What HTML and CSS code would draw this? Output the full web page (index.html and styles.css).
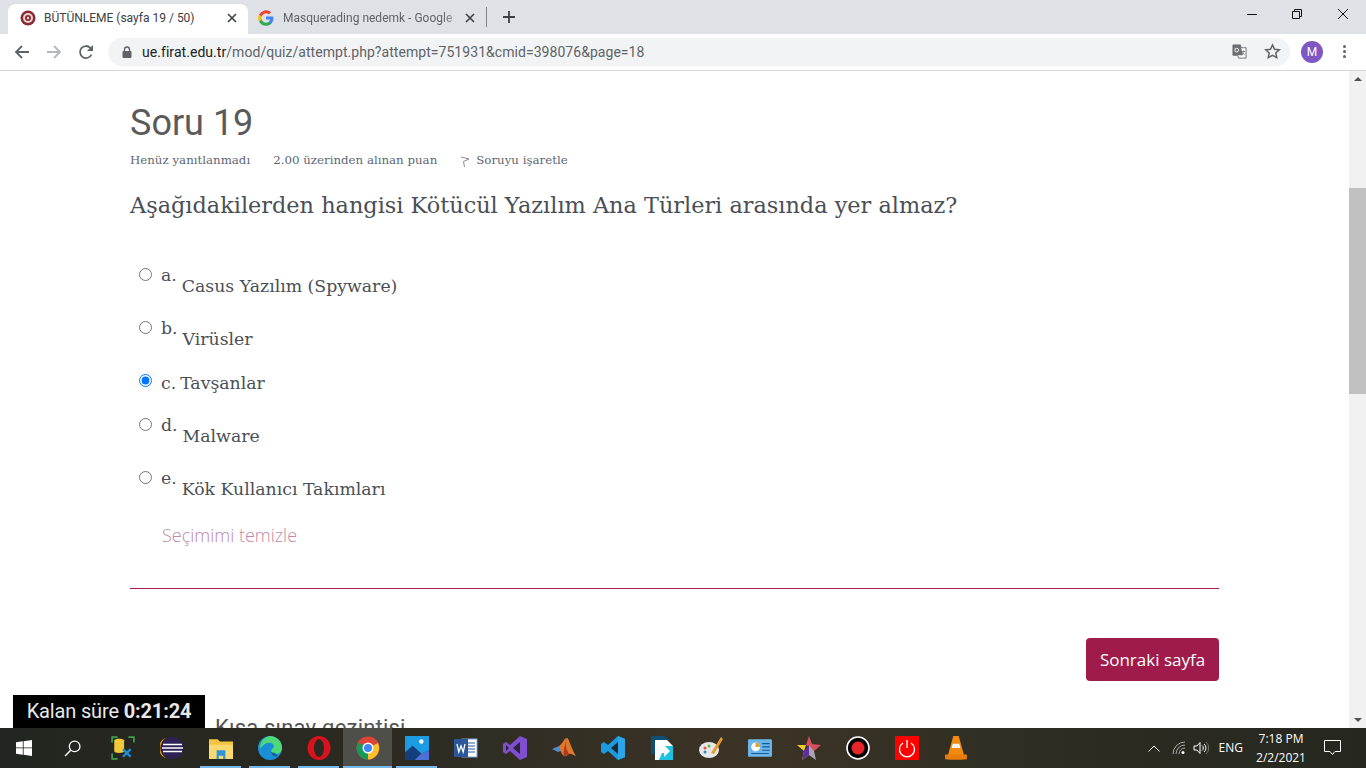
FILE: index.html
```html
<!DOCTYPE html>
<html lang="tr">
<head>
<meta charset="utf-8">
<title>BÜTÜNLEME (sayfa 19 / 50)</title>
<link rel="stylesheet" href="styles.css">
</head>
<body>
<div class="screen">
  <header class="tabbar">
    <div class="tab active">
      <svg class="fav" viewBox="0 0 16 16"><circle cx="8" cy="8" r="7.5" fill="#8c2a32"/><circle cx="8" cy="8" r="5" fill="#e8d5d5"/><circle cx="8" cy="8" r="3" fill="#8c2a32"/><circle cx="8" cy="8" r="1.2" fill="#e8d5d5"/></svg>
      <span class="tab-title">BÜTÜNLEME (sayfa 19 / 50)</span>
      <svg class="tab-x" viewBox="0 0 10 10"><path d="M1 1l8 8M9 1l-8 8" stroke="#3c4043" stroke-width="1.6"/></svg>
    </div>
    <div class="tab second">
      <svg class="fav" viewBox="0 0 16 16"><path d="M15.4 8.2c0-.6 0-1.100-.2-1.600H8v3h4.100a3.600 3.600 0 0 1-1.500 2.300v2h2.500c1.500-1.400 2.300-3.400 2.300-5.700z" fill="#4285f4"/><path d="M8 15.700c2.100 0 3.800-.7 5.100-1.800l-2.500-2c-.7.500-1.600.8-2.600.8-2 0-3.700-1.400-4.300-3.200H1.100v2A7.700 7.700 0 0 0 8 15.700z" fill="#34a853"/><path d="M3.700 9.500a4.600 4.600 0 0 1 0-3V4.500H1.100a7.700 7.700 0 0 0 0 7z" fill="#fbbc05"/><path d="M8 3.300c1.100 0 2.100.4 2.900 1.100l2.200-2.200A7.700 7.700 0 0 0 1.100 4.500l2.600 2C4.300 4.700 6 3.300 8 3.300z" fill="#ea4335"/></svg>
      <span class="tab-title fade">Masquerading nedemk - Google</span>
      <svg class="tab-x" viewBox="0 0 10 10"><path d="M1 1l8 8M9 1l-8 8" stroke="#3c4043" stroke-width="1.6"/></svg>
    </div>
    <span class="tab-sep"></span>
    <svg class="new-tab" viewBox="0 0 12 12"><path d="M6 0v12M0 6h12" stroke="#3c4043" stroke-width="1.800"/></svg>
    <div class="win-btns">
      <svg viewBox="0 0 12 12"><path d="M1 6.500h10" stroke="#111" stroke-width="1"/></svg>
      <svg viewBox="0 0 12 12"><path d="M1.500 3.500h7v7h-7zM3.500 3.500v-2h7v7h-2" fill="none" stroke="#111" stroke-width="1"/></svg>
      <svg viewBox="0 0 12 12"><path d="M1 1l10 10M11 1L1 11" stroke="#111" stroke-width="1"/></svg>
    </div>
  </header>
  <div class="toolbar">
    <svg class="nav" viewBox="0 0 16 16"><path d="M15 8H2M8 2L2 8l6 6" fill="none" stroke="#5f6368" stroke-width="1.800"/></svg>
    <svg class="nav" viewBox="0 0 16 16"><path d="M1 8h13M8 2l6 6-6 6" fill="none" stroke="#b5b8bb" stroke-width="1.800"/></svg>
    <svg class="nav" viewBox="0 0 16 16"><path d="M13.500 10.500A6 6 0 1 1 12.300 3.800L14.500 6" fill="none" stroke="#5f6368" stroke-width="1.800"/><path d="M15 1v6H9z" fill="#5f6368"/></svg>
    <div class="omnibox">
      <svg class="lock" viewBox="0 0 10 12"><path d="M2.500 5V3.500a2.500 2.500 0 0 1 5 0V5" fill="none" stroke="#5f6368" stroke-width="1.300"/><rect x="0.500" y="5" width="9" height="7" rx="1" fill="#5f6368"/></svg>
      <span class="url"><b>ue.firat.edu.tr</b>/mod/quiz/attempt.php?attempt=751931&amp;cmid=398076&amp;page=18</span>
      <svg class="translate" viewBox="0 0 16 16"><path d="M1 1h8l1 3h5v11H7l-1-3H1z" fill="#fff" stroke="#6b6e72" stroke-width="1"/><path d="M1 1h8l2.500 11H1z" fill="#6b6e72"/><circle cx="5" cy="6.500" r="2" fill="none" stroke="#fff" stroke-width="1"/><path d="M10 8h4M12 7v1M13 8c-.5 2-2 3-3 3.500M10.500 8.500c.5 1.500 2 2.500 3 3" fill="none" stroke="#6b6e72" stroke-width=".8"/></svg>
      <svg class="star" viewBox="0 0 16 16"><path d="M8 1.800l1.900 4.100 4.500.5-3.300 3 .9 4.400L8 11.600l-4 2.200.9-4.400-3.300-3 4.500-.5z" fill="none" stroke="#5f6368" stroke-width="1.400"/></svg>
    </div>
    <span class="avatar">M</span>
    <span class="menu"><i></i><i></i><i></i></span>
  </div>

  <div class="viewport">
    <main class="page">
      <h2 class="qno">Soru 19</h2>
      <div class="qinfo">
        <span>Henüz yanıtlanmadı</span>
        <span>2.00 üzerinden alınan puan</span>
        <span class="flag"><svg viewBox="0 0 10 12"><path d="M1 1l8 2-5.500 2.500L4.500 11" fill="none" stroke="#8a8a8a" stroke-width="1"/></svg>Soruyu işaretle</span>
      </div>
      <p class="qtext">Aşağıdakilerden hangisi Kötücül Yazılım Ana Türleri arasında yer almaz?</p>
      <div class="answers">
        <label class="ans"><input type="radio" name="a"><span class="letter">a.</span><span class="low">Casus Yazılım (Spyware)</span></label>
        <label class="ans"><input type="radio" name="a"><span class="letter">b.</span><span class="low">Virüsler</span></label>
        <label class="ans flat"><input type="radio" name="a" checked><span class="letter">c.</span><span class="w-c">Tavşanlar</span></label>
        <label class="ans"><input type="radio" name="a"><span class="letter">d.</span><span class="low">Malware</span></label>
        <label class="ans"><input type="radio" name="a"><span class="letter">e.</span><span class="low">Kök Kullanıcı Takımları</span></label>
      </div>
      <a class="clear">Seçimimi temizle</a>
      <div class="rule"></div>
      <div class="submit-row"><button class="next">Sonraki sayfa</button></div>
      <h3 class="navhead">Kısa sınav gezintisi</h3>
    </main>
    <div class="scrollbar">
      <span class="arrow up"></span>
      <span class="thumb"></span>
      <span class="arrow down"></span>
    </div>
    <div class="timer">Kalan süre <b>0:21:24</b></div>
  </div>

  <footer class="taskbar">
    <div class="slot start"><svg viewBox="0 0 16 16"><path d="M0 2.300l6.800-1v6.200H0zM7.600 1.200L16 0v7.500H7.600zM0 8.300h6.800v6.400l-6.800-1zM7.600 8.300H16V16l-8.400-1.200z" fill="#fff"/></svg></div>
    <div class="slot search"><svg viewBox="0 0 16 16"><circle cx="10" cy="6" r="5" fill="none" stroke="#fff" stroke-width="1.200"/><path d="M6.300 9.700L1 15" stroke="#fff" stroke-width="1.400"/></svg></div>
    <div class="slot app"><svg viewBox="0 0 22 22"><path d="M1 6V1h5M16 1h5v5M1 16v5h5" fill="none" stroke="#3fa34d" stroke-width="1.500"/><path d="M3 4c0-2 9-2 9 0v10c0 2-9 2-9 0z" fill="#f3c93b"/><path d="M11 19l7-7M11 12l7 7" stroke="#1f8ed6" stroke-width="2.200"/></svg></div>
    <div class="slot app"><svg viewBox="0 0 24 24"><circle cx="12.500" cy="12" r="11" fill="#2c2255"/><path d="M6 1.800A11 11 0 0 0 6 22.200 12 12 0 0 1 6 1.800z" fill="#f7941e"/><path d="M3 8.500h19M2 12h21M3 15.500h19" stroke="#fff" stroke-width="1.500"/></svg></div>
    <div class="slot app on"><svg viewBox="0 0 22 20"><path d="M0 2h8l2 2h12v16H0z" fill="#f5c542"/><path d="M0 7h22v13H0z" fill="#fbd971"/><path d="M7 12h8v8h-2v-3H9v3H7z" fill="#2f93d8"/></svg></div>
    <div class="slot app on"><svg viewBox="0 0 24 24"><circle cx="12" cy="12" r="12" fill="#1a8fd8"/><path d="M12 0a12 12 0 0 1 12 12c0 4-3 6-6 6s-5-1-5-3 3-3 3-5-3-4-7-3c-3 1-6 4-7 6A12 12 0 0 1 12 0z" fill="#4fd87a"/><path d="M13 15c0 3 3 7 7 5l-3-3c-2 0-4-1-4-2z" fill="#12609c"/></svg></div>
    <div class="slot app on"><svg viewBox="0 0 24 24"><ellipse cx="12" cy="12" rx="11.500" ry="12" fill="#d8131f"/><ellipse cx="12" cy="12" rx="5" ry="9" fill="#2a2a22"/></svg></div>
    <div class="slot app on current"><svg viewBox="0 0 24 24"><circle cx="12" cy="12" r="11.500" fill="#db4437"/><path d="M12 12L22 7a11.500 11.500 0 0 1-10 16.500z" fill="#fbc02d"/><path d="M12 12L2 6.500A11.500 11.500 0 0 0 12 23.500z" fill="#0f9d58"/><circle cx="12" cy="12" r="5.500" fill="#fff"/><circle cx="12" cy="12" r="4" fill="#4285f4"/></svg></div>
    <div class="slot app on"><svg viewBox="0 0 22 22"><rect width="22" height="22" fill="#1b9ce2"/><path d="M0 22V15l7-6 8 7 7-3v9z" fill="#143f7c"/><path d="M9 22l6-6 7-3v9z" fill="#4c71d4"/><circle cx="15" cy="5" r="2" fill="#fff"/></svg></div>
    <div class="slot app"><svg viewBox="0 0 24 22"><rect x="8" y="2" width="15" height="18" fill="#fff" stroke="#7fa4d8"/><path d="M14 6h7M14 9h7M14 12h7M14 15h7" stroke="#2b579a"/><rect y="2" width="14" height="18" fill="#2b579a"/><path d="M3 7l1.800 8 2.200-6 2.200 6L11 7" fill="none" stroke="#fff" stroke-width="1.300"/></svg></div>
    <div class="slot app"><svg viewBox="0 0 24 24"><path d="M17 0l7 3v18l-7 3-10-9-4 3-3-2V8l3-2 4 3z" fill="#7f4fd0"/><path d="M17 6v12l-7-6z" fill="#2a2438"/><path d="M3 9l3 3-3 3z" fill="#2a2438"/></svg></div>
    <div class="slot app"><svg viewBox="0 0 24 22"><path d="M0 12l7-3 5 4-6 2z" fill="#4f8cc9"/><path d="M7 9c3-1 5-8 8-8 2 0 5 13 9 18-4-1-5-3-7-2s-3 3-5 2-3-4-5-10z" fill="#e0782a"/><path d="M15 1c-2 3-2 9 2 16-3 1-4 3-5 2-1-3 1-14 3-18z" fill="#b33a1a"/></svg></div>
    <div class="slot app"><svg viewBox="0 0 24 24"><path d="M17 0l7 3v18l-7 3-10-9-4 3-3-2V8l3-2 4 3z" fill="#1a9be0"/><path d="M17 6v12l-7-6z" fill="#23272a"/><path d="M17 0l7 3v18l-7 3z" fill="#2aa5ea"/></svg></div>
    <div class="slot app"><svg viewBox="0 0 22 24"><path d="M0 0h13l6 4H4v14H0z" fill="#0e4f73"/><path d="M4 4h12l6 6v14H4z" fill="#fff"/><path d="M14 10l8 0v14H8z" fill="#1ec3e0"/><path d="M6 13h7V9l6 6-6 6v-4H6z" fill="#fff"/></svg></div>
    <div class="slot app"><svg viewBox="0 0 24 24"><ellipse cx="10" cy="14" rx="10" ry="8" fill="#e6e8e8"/><circle cx="6" cy="12" r="1.500" fill="#e5533d"/><circle cx="10" cy="10" r="1.500" fill="#5fb84d"/><circle cx="6" cy="16" r="1.500" fill="#3b82c4"/><path d="M22 1l2 2-9 15-3-1z" fill="#e89a2c"/></svg></div>
    <div class="slot app"><svg viewBox="0 0 22 16"><rect width="22" height="16" rx="1" fill="#6db5e8"/><circle cx="7" cy="7" r="4" fill="#fff"/><path d="M7 7V3a4 4 0 0 1 4 4z" fill="#e0a02c"/><path d="M13 4h7M13 7h7M13 10h7M3 13h16" stroke="#0e5d96"/></svg></div>
    <div class="slot app"><svg viewBox="0 0 24 24"><path d="M12 0l3 8 9 1-7 6-8-6z" fill="#d94f58"/><path d="M12 0L9 9 0 9l7 6z" fill="#f5c927"/><path d="M7 15l-2 9 7-5z" fill="#f5c927"/><path d="M7 15l5-6v10l-7 5z" fill="#5e2da0"/><path d="M17 15l2 9-7-5V9z" fill="#a9a4b5"/></svg></div>
    <div class="slot app"><svg viewBox="0 0 24 24"><circle cx="12" cy="12" r="11" fill="#000" stroke="#fff" stroke-width="1.600"/><circle cx="12" cy="12" r="6.500" fill="#e5262a"/></svg></div>
    <div class="slot app"><svg viewBox="0 0 24 24"><rect width="24" height="24" fill="#f00"/><path d="M8 7a7.500 7.500 0 1 0 8 0M12 4v8" fill="none" stroke="#fff" stroke-width="1.300"/></svg></div>
    <div class="slot app"><svg viewBox="0 0 20 22"><path d="M10 0l2.500 0 5 18H2.500L7.500 0z" fill="#f08a10"/><path d="M7 7h6l1 4H6z" fill="#f3f3f3"/><path d="M0 17h20v4c0 1-20 1-20 0z" fill="#e87c0c"/></svg></div>
    <div class="tray">
      <svg class="t-chev" viewBox="0 0 12 7"><path d="M.5 6.500L6 1l5.500 5.500" fill="none" stroke="#fff" stroke-width="1"/></svg>
      <svg class="t-wifi" viewBox="0 0 14 14"><path d="M1 13A12 12 0 0 1 13 1M4 13A9 9 0 0 1 13 4M7 13a6 6 0 0 1 6-6" fill="none" stroke="#aaa" stroke-width="1"/><circle cx="11" cy="11.500" r="1.500" fill="#fff"/></svg>
      <svg class="t-vol" viewBox="0 0 16 14"><path d="M1 5h3l3-3.500v11L4 9H1z" fill="none" stroke="#fff" stroke-width="1"/><path d="M9 4.500a3 3 0 0 1 0 5M11 3a5 5 0 0 1 0 8" fill="none" stroke="#fff" stroke-width="1"/><path d="M13 1a8 8 0 0 1 0 12" fill="none" stroke="#777" stroke-width="1"/></svg>
      <span class="t-lang">ENG</span>
      <span class="t-clock"><span>7:18 PM</span><span>2/2/2021</span></span>
      <svg class="t-note" viewBox="0 0 17 16"><path d="M.5.500h16v11h-5.500l-2.500 3-2.500-3H.5z" fill="none" stroke="#fff" stroke-width="1"/></svg>
    </div>
  </footer>
</div>
</body>
</html>
```
FILE: styles.css
```css
* { box-sizing: border-box; }
html, body { margin: 0; height: 100%; overflow: hidden; }
body { font-family: "Liberation Sans", Arial, sans-serif; background: #fff; }
.screen { width: 1366px; height: 768px; display: flex; flex-direction: column; overflow: hidden; }

.tabbar { height: 34px; flex: none; background: #dee1e6; display: flex; align-items: flex-end; padding-left: 8px; }
.tab { height: 30px; display: flex; align-items: center; color: #5f6368; font: 12px/16px "Roboto", sans-serif; flex: none; }
.tab.active { width: 240px; background: #fff; border-radius: 8px 8px 0 0; color: #3c4043; padding: 0 11px 2px 12px; }
.tab.second { width: 238px; padding: 0 11px 2px 10px; }
.fav { width: 16px; height: 16px; flex: none; margin-right: 8px; }
.tab.second .fav { margin-right: 9px; }
.tab-title { flex: 1; min-width: 0; white-space: nowrap; }
.tab-title.fade { -webkit-mask-image: linear-gradient(90deg, #000 88%, transparent); mask-image: linear-gradient(90deg, #000 88%, transparent); }
.tab-x { width: 10px; height: 10px; flex: none; }
.tab-sep { width: 1px; height: 20px; background: #80868b; margin: 0 0 7px 0; flex: none; }
.new-tab { width: 12px; height: 12px; margin: 0 0 11px 16px; flex: none; }
.win-btns { margin-left: auto; display: flex; height: 34px; align-items: center; }
.win-btns svg { width: 12px; height: 12px; margin: -6px 17px 0 17px; flex: none; }
.win-btns svg:first-child { margin-right: 16px; }

.toolbar { height: 37px; flex: none; background: #fff; border-bottom: 1px solid #d6d6d6; display: flex; align-items: center; padding: 0 0 1px 14px; }
.nav { width: 16px; height: 16px; flex: none; margin-right: 16px; }
.nav:nth-child(3) { margin-right: 14px; }
.omnibox { width: 1182px; height: 28px; border-radius: 14px; background: #f1f3f4; display: flex; align-items: center; padding: 0 9px 0 14px; flex: none; }
.lock { width: 10px; height: 12px; flex: none; margin-right: 10px; }
.url { font: 14px/18px "Roboto", sans-serif; color: #5f6368; flex: 1; white-space: nowrap; letter-spacing: .05px; }
.url b { font-weight: 400; color: #202124; }
.translate { width: 15px; height: 15px; flex: none; margin-right: 17px; }
.star { width: 17px; height: 17px; flex: none; }
.avatar { width: 22px; height: 22px; border-radius: 50%; background: #7e57c2; color: #fff; font: 12px/22px "Roboto", sans-serif; text-align: center; margin-left: 11px; flex: none; }
.menu { display: flex; flex-direction: column; gap: 2px; margin-left: 20px; flex: none; }
.menu i { width: 3px; height: 3px; border-radius: 50%; background: #5f6368; }

.viewport { flex: 1; min-height: 0; display: flex; position: relative; overflow: hidden; }
.page { flex: 1; min-width: 0; padding: 28px 130px 0; }
.qno { margin: 0; font: 400 36px/48px "Roboto", sans-serif; color: #5a5a5a; }
.qinfo { display: flex; gap: 23px; margin-top: 4px; font: 11.800px/18px "DejaVu Serif", serif; color: #5d6772; }
.flag { display: flex; align-items: center; }
.flag svg { width: 10px; height: 12px; margin: 3px 6px 0 0; }
.qtext { margin: 19px 0 0; font: 22.400px/34px "DejaVu Serif", serif; color: #4a4f57; }
.answers { margin-top: 42px; display: flex; flex-direction: column; font: 17.300px/26px "DejaVu Serif", serif; color: #4a4f57; }
.ans { display: flex; align-items: flex-start; height: 53px; padding-left: 9px; }
.ans.flat { height: 44px; }
.ans input { width: 13px; height: 13px; margin: 4px 9px 0 0; accent-color: #0075ff; flex: none; }
.letter { margin-right: 5px; line-height: 22px; }
.ans.flat .letter { line-height: 26px; margin-right: 4px; }
.low { position: relative; top: 9px; }
.clear { display: block; margin: 3px 0 0 32px; font: 300 18px/24px "Open Sans", sans-serif; color: #c08aa4; }
.rule { margin: 41px 0 0; height: 1px; background: #b0184f; }
.submit-row { display: flex; justify-content: flex-end; margin-top: 49px; }
.next { height: 43px; width: 133px; padding: 0; border: 0; border-radius: 4px; background: #9e1b4b; color: #fff; font: 17px/24px "Open Sans", sans-serif; }
.navhead { margin: 33px 0 0 85px; font: 400 22px/28px "Roboto", sans-serif; color: #545454; letter-spacing: .2px; }

.scrollbar { width: 17px; flex: none; background: #f1f1f1; display: flex; flex-direction: column; justify-content: space-between; position: relative; }
.thumb { position: absolute; left: 0; right: 0; top: 117px; height: 206px; background: #c1c1c1; }
.arrow { width: 0; height: 0; margin: 6px auto; border-left: 4px solid transparent; border-right: 4px solid transparent; }
.arrow.up { border-bottom: 4px solid #505050; }
.arrow.down { border-top: 4px solid #505050; }

.timer { position: absolute; left: 13px; top: 624px; width: 192px; height: 33px; background: #000; color: #e8e8e8; font: 20px/32px "Roboto", sans-serif; text-align: center; letter-spacing: -.15px; }
.timer b { font-weight: 700; }

.taskbar { height: 40px; flex: none; background: linear-gradient(90deg, #22251f 0, #2d2b22 30%, #3b3426 55%, #2a2a21 85%, #26281f 100%); display: flex; align-items: stretch; color: #fff; }
.slot { width: 49px; flex: none; display: flex; align-items: center; justify-content: center; position: relative; }
.slot.start { width: 48px; }
.slot.search { width: 50px; padding-right: 2px; }
.slot.start svg { width: 16px; height: 16px; }
.slot > svg { width: 24px; height: 24px; }
.slot.search svg { width: 17px; height: 17px; }
.slot.current { background: #4e4f49; }
.slot.on::after { content: ""; position: absolute; left: 4px; right: 4px; bottom: 0; height: 2px; background: #76b9ed; }
.slot.current::after { left: 0; right: 0; }
.tray { margin-left: auto; display: flex; align-items: center; }
.t-chev { width: 12px; height: 7px; margin-right: 12px; }
.t-wifi { width: 14px; height: 14px; margin-right: 7px; }
.t-vol { width: 16px; height: 14px; margin-right: 10px; }
.t-lang { font: 12px/16px "Open Sans", sans-serif; margin-right: 15px; }
.t-clock { display: flex; flex-direction: column; align-items: center; font: 12px/19px "Open Sans", sans-serif; width: 46px; margin-right: 20px; }
.t-note { width: 17px; height: 16px; margin-right: 25px; }
```
